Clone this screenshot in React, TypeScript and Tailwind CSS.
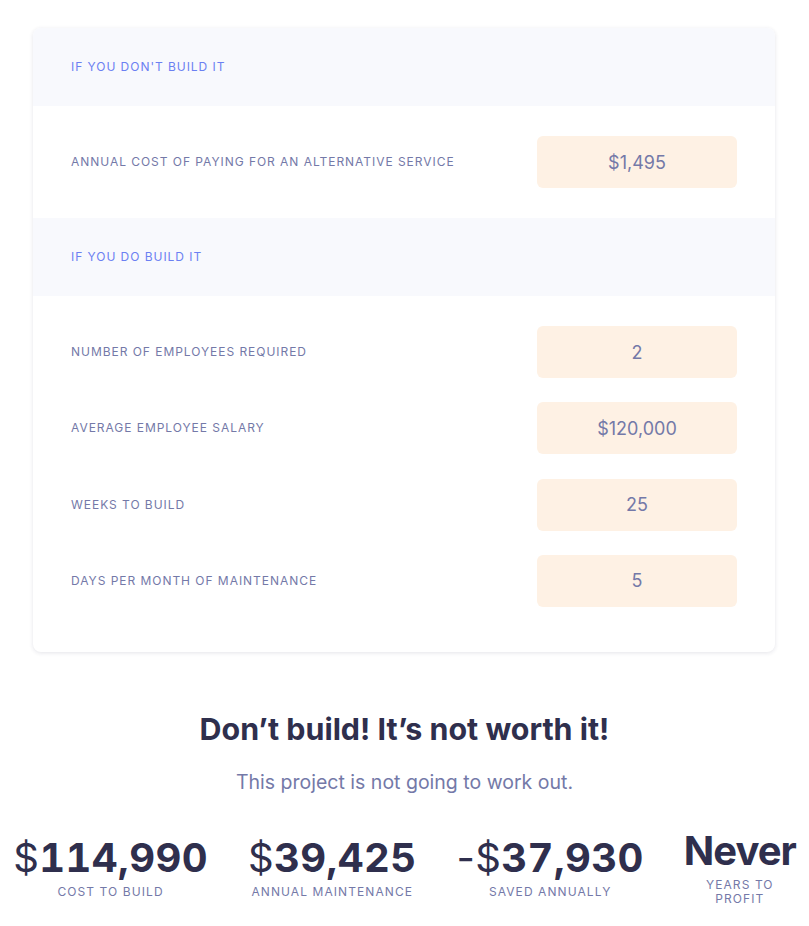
import React from 'react';

const font = { fontFamily: 'Inter, "Noto Sans", sans-serif' };

interface FieldProps {
  label: string;
  value: string;
}

function Field({ label, value }: FieldProps) {
  return (
    <div className="flex items-center justify-between">
      <span className="text-[12px] uppercase tracking-[0.08em] text-[#7479a8]">{label}</span>
      <div className="w-[200px] h-[52px] rounded-md bg-[#fef1e4] flex items-center justify-center text-[18px] text-[#7479a8]">
        {value}
      </div>
    </div>
  );
}

function SectionHeader({ title }: { title: string }) {
  return (
    <div className="h-[78px] bg-[#f8f9fd] px-[38px] flex items-center">
      <span className="text-[12px] uppercase tracking-[0.08em] text-[#6b80f2]">{title}</span>
    </div>
  );
}

interface StatProps {
  prefix: string;
  value: string;
  label: string;
  narrow?: boolean;
}

function Stat({ prefix, value, label, narrow }: StatProps) {
  return (
    <div className={`flex flex-col items-center text-center gap-[3px] ${narrow ? 'w-[112px]' : ''}`}>
      <div
        className={`text-[40px] leading-[48px] text-[#2f2f4d] whitespace-nowrap ${
          narrow ? 'tracking-[-0.025em]' : 'tracking-[0.01em]'
        }`}
      >
        {prefix && <span className="font-normal">{prefix}</span>}
        <span className={`font-bold ${narrow ? '' : 'tabular-nums'}`}>{value}</span>
      </div>
      <div className="text-[12px] leading-[14px] uppercase tracking-[0.09em] text-[#7479a8]">{label}</div>
    </div>
  );
}

export default function App() {
  return (
    <div className="min-h-screen bg-white pt-[28px]" style={font}>
      <div className="ml-[33px] mr-[34px] rounded-lg bg-white shadow-[0_1px_4px_rgba(30,30,70,0.12)] overflow-hidden">
        <SectionHeader title="If you don't build it" />
        <div className="px-[38px] py-[30px]">
          <Field label="Annual cost of paying for an alternative service" value="$1,495" />
        </div>
        <SectionHeader title="If you do build it" />
        <div className="px-[38px] pt-[30px] pb-[45px] flex flex-col gap-[24.3px]">
          <Field label="Number of employees required" value="2" />
          <Field label="Average employee salary" value="$120,000" />
          <Field label="Weeks to build" value="25" />
          <Field label="Days per month of maintenance" value="5" />
        </div>
      </div>

      <h1 className="mt-[57px] text-center text-[30.4px] leading-[40px] font-bold text-[#2f2f4d]">
        Don’t build! It’s not worth it!
      </h1>
      <p className="mt-[19px] text-center text-[19.5px] leading-[28px] text-[#7479a8]">
        This project is not going to work out.
      </p>

      <div className="mt-[31px] flex items-center justify-center gap-10">
        <Stat prefix="$" value="114,990" label="Cost to build" />
        <Stat prefix="$" value="39,425" label="Annual maintenance" />
        <Stat prefix="-$" value="37,930" label="Saved annually" />
        <Stat prefix="" value="Never" label="Years to profit" narrow />
      </div>
    </div>
  );
}
